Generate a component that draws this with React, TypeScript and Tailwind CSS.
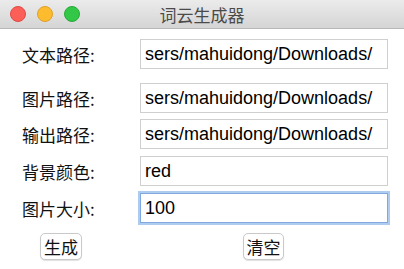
import React from "react";

const cjk = { fontFamily: '"Noto Sans CJK SC", "Noto Sans", sans-serif' };
const latin = { fontFamily: '"Liberation Sans", "Noto Sans CJK SC", sans-serif' };

function Row({ label, value, mt, focused }: { label: string; value: string; mt: string; focused?: boolean }) {
  return (
    <div className={`flex items-center h-[30px] ${mt}`}>
      <div className="w-[118px] text-[17px] text-[#111] leading-none" style={cjk}>
        {label}:
      </div>
      <div
        className={
          focused
            ? "w-[248px] h-[30px] bg-white border border-[#7fa9e0] shadow-[0_0_0_2px_#aecbf0] flex items-center pl-[4px] text-[18px] text-black leading-none"
            : "w-[248px] h-[30px] bg-white border border-[#cfcfcf] flex items-center pl-[4px] text-[18px] text-black leading-none"
        }
        style={latin}
      >
        {value}
      </div>
    </div>
  );
}

export default function App() {
  return (
    <div className="w-[404px] h-[269px] bg-white overflow-hidden rounded-b-[5px]">
      <div className="h-[29px] grid grid-cols-[1fr_auto_1fr] items-center bg-gradient-to-b from-[#ebebeb] to-[#d5d5d5] border-b border-[#b9b9b9]">
        <div className="flex items-center gap-[11px] pl-[10px]">
          <span className="w-[16px] h-[16px] rounded-full bg-[#fc5f57] border border-[#df4a43]" />
          <span className="w-[16px] h-[16px] rounded-full bg-[#fdbc2e] border border-[#dfa02a]" />
          <span className="w-[16px] h-[16px] rounded-full bg-[#33c748] border border-[#27aa35]" />
        </div>
        <div className="text-[17px] text-[#4a4a4a] leading-none" style={cjk}>
          词云生成器
        </div>
        <div />
      </div>
      <div className="pl-[22px]">
        <Row label="文本路径" value="sers/mahuidong/Downloads/" mt="mt-[10px]" />
        <Row label="图片路径" value="sers/mahuidong/Downloads/" mt="mt-[14px]" />
        <Row label="输出路径" value="sers/mahuidong/Downloads/" mt="mt-[6px]" />
        <Row label="背景颜色" value="red" mt="mt-[7px]" />
        <Row label="图片大小" value="100" mt="mt-[7px]" focused />
        <div className="flex items-center mt-[10px]">
          <button
            className="ml-[18px] w-[42px] h-[27px] bg-white border border-[#c9c9c9] rounded-[5px] shadow-[0_1px_1px_rgba(0,0,0,0.12)] text-[17px] text-[#111] leading-none flex items-center justify-center"
            style={cjk}
          >
            生成
          </button>
          <button
            className="ml-[161px] w-[41px] h-[27px] bg-white border border-[#c9c9c9] rounded-[5px] shadow-[0_1px_1px_rgba(0,0,0,0.12)] text-[17px] text-[#111] leading-none flex items-center justify-center"
            style={cjk}
          >
            清空
          </button>
        </div>
      </div>
    </div>
  );
}
